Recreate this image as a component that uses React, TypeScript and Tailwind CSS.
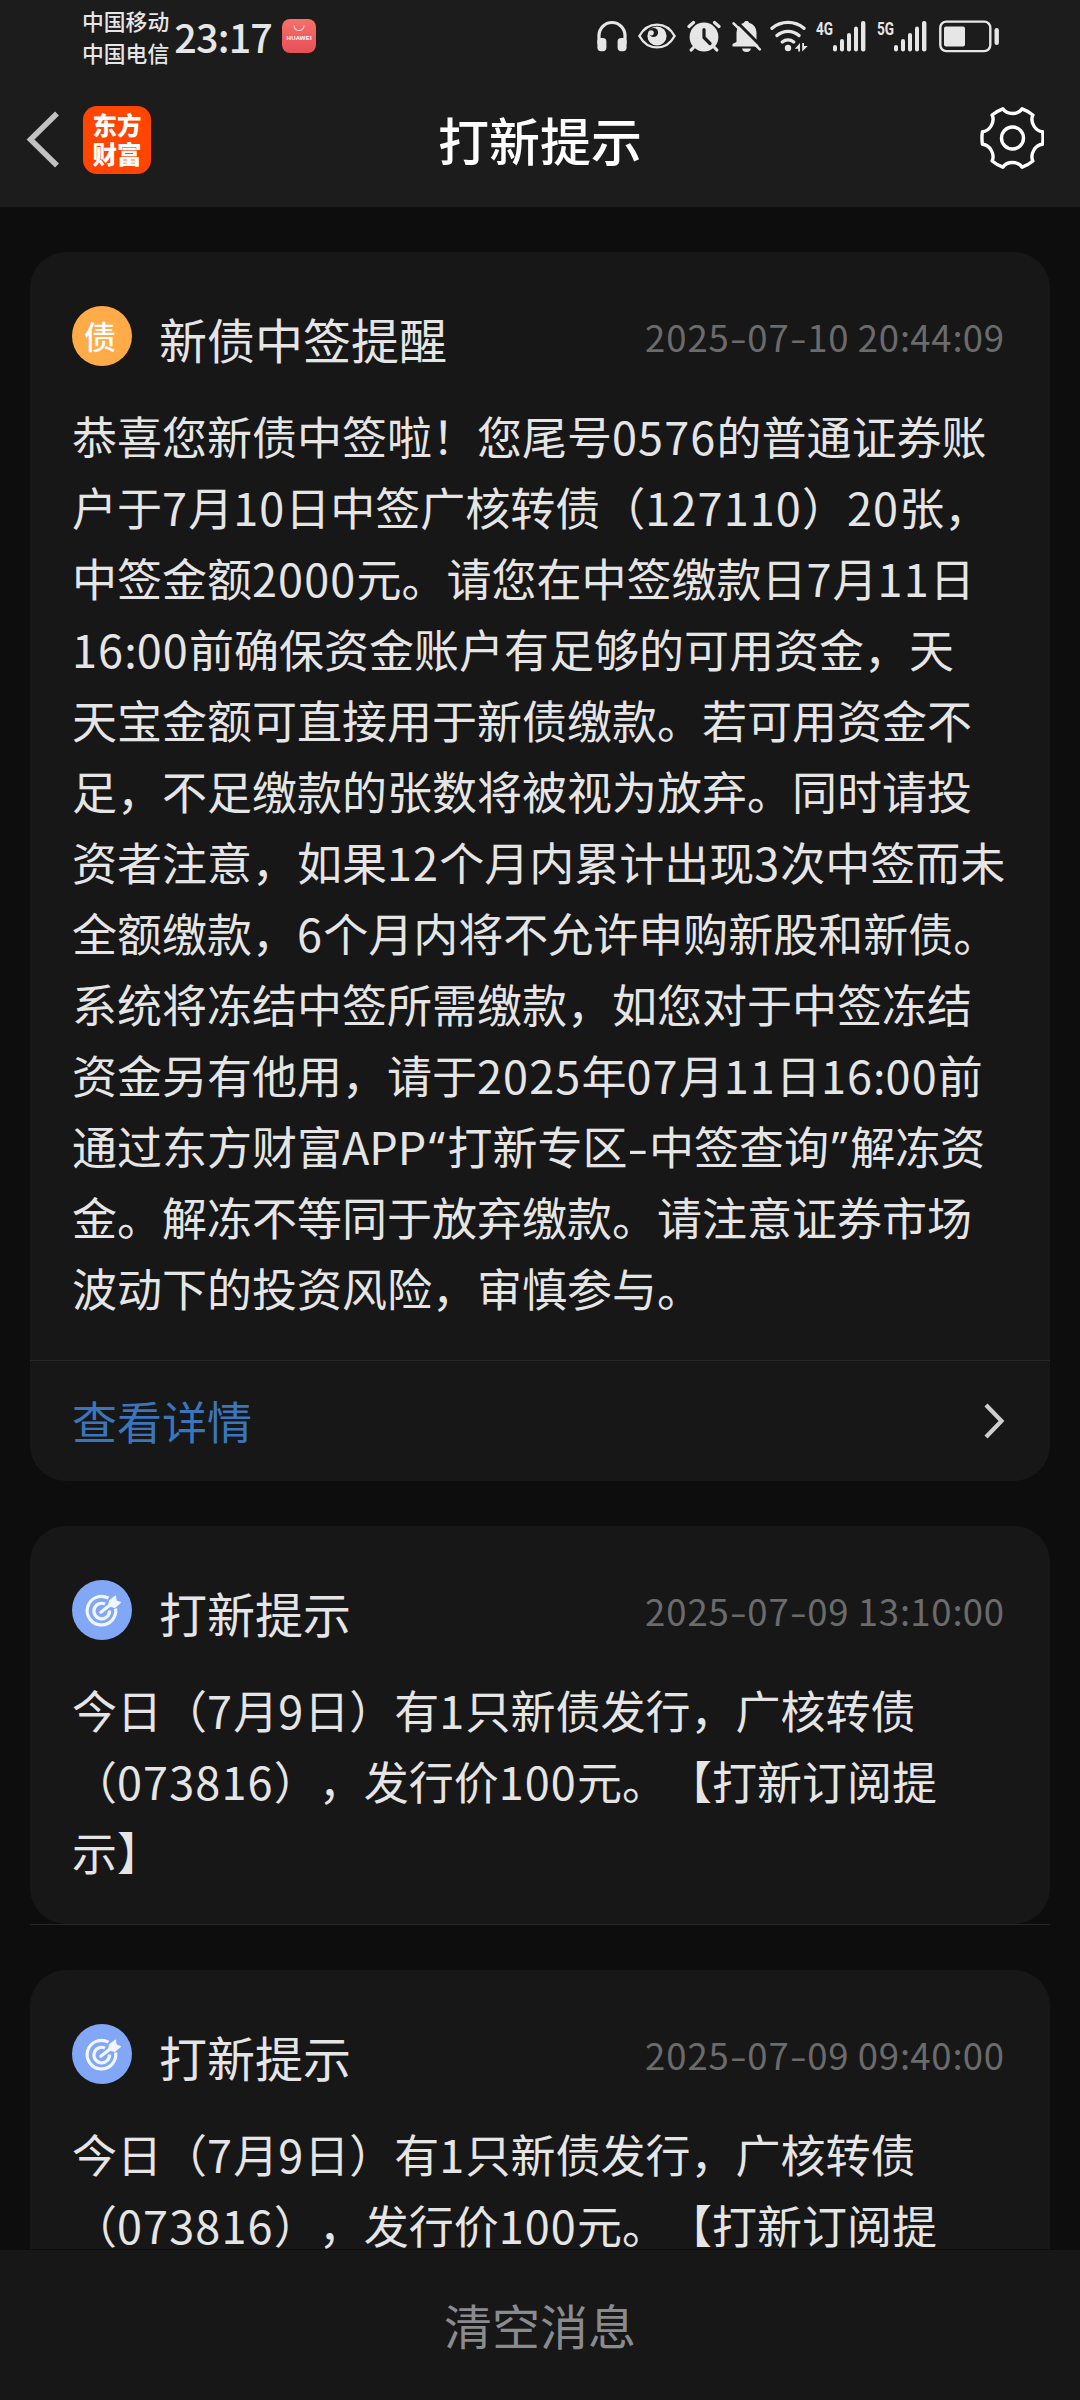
import { Fragment, type ReactNode } from "react";

interface Message {
  id: string;
  kind: "bond" | "tip";
  title: string;
  time: string;
  lines: string[];
  hasDetail?: boolean;
}

const TIP_LINES = [
  "今日（7月9日）有1只新债发行，广核转债",
  "（073816），发行价100元。【打新订阅提",
  "示】",
];

const MESSAGES: Message[] = [
  {
    id: "m1",
    kind: "bond",
    title: "新债中签提醒",
    time: "2025-07-10 20:44:09",
    hasDetail: true,
    lines: [
      "恭喜您新债中签啦！您尾号0576的普通证券账",
      "户于7月10日中签广核转债（127110）20张，",
      "中签金额2000元。请您在中签缴款日7月11日",
      "16:00前确保资金账户有足够的可用资金，天",
      "天宝金额可直接用于新债缴款。若可用资金不",
      "足，不足缴款的张数将被视为放弃。同时请投",
      "资者注意，如果12个月内累计出现3次中签而未",
      "全额缴款，6个月内将不允许申购新股和新债。",
      "系统将冻结中签所需缴款，如您对于中签冻结",
      "资金另有他用，请于2025年07月11日16:00前",
      "通过东方财富APP“打新专区-中签查询”解冻资",
      "金。解冻不等同于放弃缴款。请注意证券市场",
      "波动下的投资风险，审慎参与。",
    ],
  },
  {
    id: "m2",
    kind: "tip",
    title: "打新提示",
    time: "2025-07-09 13:10:00",
    lines: TIP_LINES,
  },
  {
    id: "m3",
    kind: "tip",
    title: "打新提示",
    time: "2025-07-09 09:40:00",
    lines: TIP_LINES,
  },
];

// Digits sit a little wider than the CJK font sets them, dashes a lot wider.
function renderText(text: string): ReactNode {
  return text.split(/([0-9]+|-|[“”])/).map((part, i) => {
    if (part === "-") {
      return (
        <span key={i} className="inline-block w-[0.48em] text-center">
          <span className="inline-block scale-x-135">-</span>
        </span>
      );
    }
    if (part === "“" || part === "”") {
      return (
        <span key={i} className="inline-block w-[0.47em] text-center font-['Noto_Sans'] leading-none">
          {part}
        </span>
      );
    }
    if (/^[0-9]/.test(part)) {
      return (
        <span key={i} className="tracking-[0.025em]">
          {part}
        </span>
      );
    }
    return <Fragment key={i}>{part}</Fragment>;
  });
}

function Signal({ label }: { label: string }) {
  return (
    <svg width="51" height="32" viewBox="0 0 51 32" fill="currentColor">
      <text
        x="0"
        y="14.5"
        fontSize="19"
        fontWeight="700"
        fontFamily="Roboto"
        textLength="17"
        lengthAdjust="spacingAndGlyphs"
      >
        {label}
      </text>
      <rect x="17" y="25" width="4" height="6.5" rx="2" />
      <rect x="24" y="19" width="4" height="12.5" rx="2" />
      <rect x="31" y="13" width="4" height="18.5" rx="2" />
      <rect x="38" y="6.5" width="4" height="25" rx="2" />
      <rect x="45" y="1" width="4.4" height="30.5" rx="2" />
    </svg>
  );
}

function StatusIcons() {
  return (
    <div className="flex h-8 text-[#e6e6e6]">
      <svg width="30" height="32" viewBox="0 0 30 32" fill="none">
        <path d="M2 24V15.5a13 13 0 0 1 26 0V24" stroke="currentColor" strokeWidth="3.2" />
        <rect x="0.4" y="18" width="9" height="13.2" rx="3.6" fill="currentColor" />
        <rect x="20.6" y="18" width="9" height="13.2" rx="3.6" fill="currentColor" />
      </svg>
      <svg className="ml-[11px]" width="38" height="32" viewBox="0 0 38 32" fill="none">
        <path
          d="M1.4 16C5.5 8.5 12 4.6 19 4.6S32.5 8.5 36.6 16C32.5 23.5 26 27.4 19 27.4S5.5 23.5 1.4 16Z"
          stroke="currentColor"
          strokeWidth="2.4"
        />
        <circle cx="19" cy="16" r="9.6" fill="currentColor" />
        <circle cx="15.5" cy="12.5" r="4.6" fill="#1c1c1c" />
        <circle cx="13.2" cy="12.8" r="2.6" fill="currentColor" />
      </svg>
      <svg className="ml-[11px]" width="34" height="32" viewBox="0 0 34 32" fill="none">
        <circle cx="17" cy="17" r="14.4" fill="currentColor" />
        <path
          d="M2 6.5L6.5 2.5M32 6.5L27.5 2.5M6.5 27.5L4.2 30M27.5 27.5L29.8 30"
          stroke="currentColor"
          strokeWidth="3.2"
          strokeLinecap="round"
        />
        <path
          d="M17 9.5V17.5L23 23.5"
          stroke="#1c1c1c"
          strokeWidth="3.2"
          strokeLinecap="round"
          strokeLinejoin="round"
        />
      </svg>
      <svg className="ml-[11px]" width="30" height="32" viewBox="0 0 30 32" fill="none">
        <path
          d="M4.5 22V12.5A10 10 0 0 1 12 2.8C12.3 0.3 16.7 0.3 17 2.8A10 10 0 0 1 24.5 12.5V21L27 26.5H0.5V24Z"
          fill="currentColor"
        />
        <path d="M10.2 28.6H18.8A4.3 3.4 0 0 1 10.2 28.6Z" fill="currentColor" />
        <path d="M3.5 0.5L30.5 27.5" stroke="#1c1c1c" strokeWidth="3" />
        <path
          d="M1.6 3.4L27.8 29.3"
          stroke="currentColor"
          strokeWidth="2.6"
          strokeLinecap="round"
        />
      </svg>
      <svg className="ml-2" width="38" height="32" viewBox="0 0 38 32" fill="none">
        <path
          d="M2 8.3A24.5 24.5 0 0 1 34 8.3M7 15.6A16.5 16.5 0 0 1 29 15.6M12.3 22A8.8 8.8 0 0 1 23.7 22"
          stroke="currentColor"
          strokeWidth="3.3"
          strokeLinecap="round"
        />
        <circle cx="18" cy="28" r="3.2" fill="currentColor" />
        <path d="M30 23V31.5H28.2V28.8H24.8ZM32.2 31.5V23H34V26H37.8Z" fill="currentColor" />
      </svg>
      <div className="ml-2">
        <Signal label="4G" />
      </div>
      <div className="ml-2.5">
        <Signal label="5G" />
      </div>
      <svg className="ml-[11px]" width="61" height="33" viewBox="0 0 61 33" fill="none">
        <rect x="1.3" y="1.6" width="50" height="29.5" rx="6" stroke="currentColor" strokeWidth="2.4" />
        <rect x="5" y="6.5" width="21" height="20" rx="2" fill="currentColor" />
        <rect x="55.5" y="8" width="4.4" height="17" rx="2.2" fill="currentColor" />
      </svg>
    </div>
  );
}

function StatusBar() {
  return (
    <div className="flex h-[75px] items-start pl-[82px] pr-20 text-[#e6e6e6]">
      <div className="pt-[5px] text-[21.8px] leading-8 font-medium">
        <div>中国移动</div>
        <div>中国电信</div>
      </div>
      <div className="ml-[5px] mt-1.5 w-[98px] text-[39.5px] leading-[60px] font-medium tracking-[-0.02em] whitespace-nowrap">
        23:17
      </div>
      <div className="mt-[19px] ml-[10px] flex h-[34px] w-[34px] flex-col items-center rounded-[8px] bg-linear-to-b from-[#f6706a] to-[#e64f57]">
        <svg width="14" height="15" viewBox="0 0 14 15" fill="none">
          <path d="M2 6.5A5 5 0 0 0 12 6.5" stroke="#ffd9d5" strokeWidth="1.1" />
        </svg>
        <span className="font-['Liberation_Sans'] text-[6px] leading-[9px] font-bold tracking-[0.2px] text-white">
          HUAWEI
        </span>
      </div>
      <div className="mt-5 ml-auto">
        <StatusIcons />
      </div>
    </div>
  );
}

function NavBar() {
  return (
    <div className="flex h-[132px] items-start justify-between pt-[31px] pr-9 pl-[26px]">
      <div className="flex w-[205px] items-center">
        <svg className="-mt-1" width="34" height="60" viewBox="0 0 34 60" fill="none">
          <path d="M31 5.5L4.5 31.5L31 57.5" stroke="#c2c2c2" strokeWidth="5.5" />
        </svg>
        <div className="ml-[23px] flex h-[68px] w-[68px] flex-col items-center justify-center rounded-[14px] bg-[#ff4500] pb-0.5 text-[24.5px] leading-[29px] font-black text-white">
          <span>东方</span>
          <span>财富</span>
        </div>
      </div>
      <h1 className="pl-[5px] text-[51px] leading-[66px] font-medium text-white">打新提示</h1>
      <div className="flex w-[200px] justify-end">
        <svg width="64" height="64" viewBox="-32.5 -32 64 64" fill="none" stroke="#fff" strokeWidth="3.4">
          <path
            strokeLinejoin="round"
            d="M-9.7 -29.2C-5.5 -23 5.5 -23 9.7 -29.2Q15.5 -27 20.4 -23C17.2 -16.3 22.7 -6.7 30.1 -6.2Q31 0 30.1 6.2C22.7 6.7 17.2 16.3 20.4 23Q15.5 27 9.7 29.2C5.5 23 -5.5 23 -9.7 29.2Q-15.5 27 -20.4 23C-17.2 16.3 -22.7 6.7 -30.1 6.2Q-31 0 -30.1 -6.2C-22.7 -6.7 -17.2 -16.3 -20.4 -23Q-15.5 -27 -9.7 -29.2Z"
          />
          <circle r="11" />
        </svg>
      </div>
    </div>
  );
}

function Avatar({ kind }: { kind: Message["kind"] }) {
  if (kind === "bond") {
    return (
      <div className="flex h-[60px] w-[60px] items-center justify-center rounded-full bg-[#ffac48] pr-1 pb-0.5 text-[32px] leading-none font-medium text-white">
        债
      </div>
    );
  }
  return (
    <svg width="60" height="60" viewBox="0 0 60 60" fill="none">
      <circle cx="30" cy="30" r="30" fill="#81a7f6" />
      <g stroke="#f1f6ff" strokeWidth="3.2">
        <path d="M36.5 18.2A14.3 14.3 0 1 0 43.6 28.5" />
        <path d="M33 24A7.8 7.8 0 1 0 37.5 30.5" />
        <path d="M28.8 32.2L40 23.5" strokeLinecap="round" />
      </g>
      <path
        d="M36.5 26L37.5 20.5L43.5 15.8L44.2 20.8L48.8 22.5L43 27.5Z"
        fill="#f1f6ff"
        stroke="#f1f6ff"
        strokeLinejoin="round"
      />
    </svg>
  );
}

function MessageCard({ message }: { message: Message }) {
  return (
    <section>
      <div
        className={
          message.hasDetail
            ? "rounded-t-[36px] bg-[#171717] px-[42px] pt-[54px] pb-[37px]"
            : "rounded-[36px] bg-[#171717] px-[42px] pt-[54px] pb-[37px]"
        }
      >
        <div className="flex h-[60px] items-center">
          <Avatar kind={message.kind} />
          <h2 className="ml-[27px] pt-1 text-[48px] leading-[60px] text-[#e5e5e5]">{message.title}</h2>
          <time className="mr-[3px] ml-auto pt-0.5 text-[36.5px] leading-[60px] whitespace-nowrap text-[#6b6b6b]">
            {renderText(message.time)}
          </time>
        </div>
        <div className="mt-[34px] text-[45px] leading-[71px] whitespace-nowrap text-[#e5e5e5]">
          {message.lines.map((line) => (
            <p key={line} className="h-[71px]">
              {renderText(line)}
            </p>
          ))}
        </div>
      </div>
      <div className="h-px bg-[#272727]" />
      {message.hasDetail && (
        <div className="flex h-[120px] items-center justify-between rounded-b-[36px] bg-[#171717] pr-[45px] pl-[42px]">
          <span className="pb-0.5 text-[45px] leading-[71px] text-[#3b76bd]">查看详情</span>
          <svg width="22" height="38" viewBox="0 0 22 38" fill="none">
            <path d="M3 3L18.5 19L3 35" stroke="#cfcfcf" strokeWidth="4.2" />
          </svg>
        </div>
      )}
    </section>
  );
}

export default function App() {
  return (
    <div
      lang="zh-CN"
      className="flex h-[2400px] w-[1080px] flex-col overflow-hidden bg-[#0d0d0d] font-['Noto_Sans_CJK_SC',sans-serif] [text-spacing-trim:space-all]"
    >
      <header className="h-[207px] shrink-0 bg-[#1c1c1c]">
        <StatusBar />
        <NavBar />
      </header>
      <main className="flex min-h-0 flex-1 flex-col gap-[45px] overflow-hidden px-[30px] pt-[45px]">
        {MESSAGES.map((message) => (
          <MessageCard key={message.id} message={message} />
        ))}
      </main>
      <footer className="flex h-[151px] shrink-0 items-center justify-center border-t border-[#0d0d0d] bg-[#171717] pb-[3px] text-[48px] text-[#8b8b8f]">
        清空消息
      </footer>
    </div>
  );
}
